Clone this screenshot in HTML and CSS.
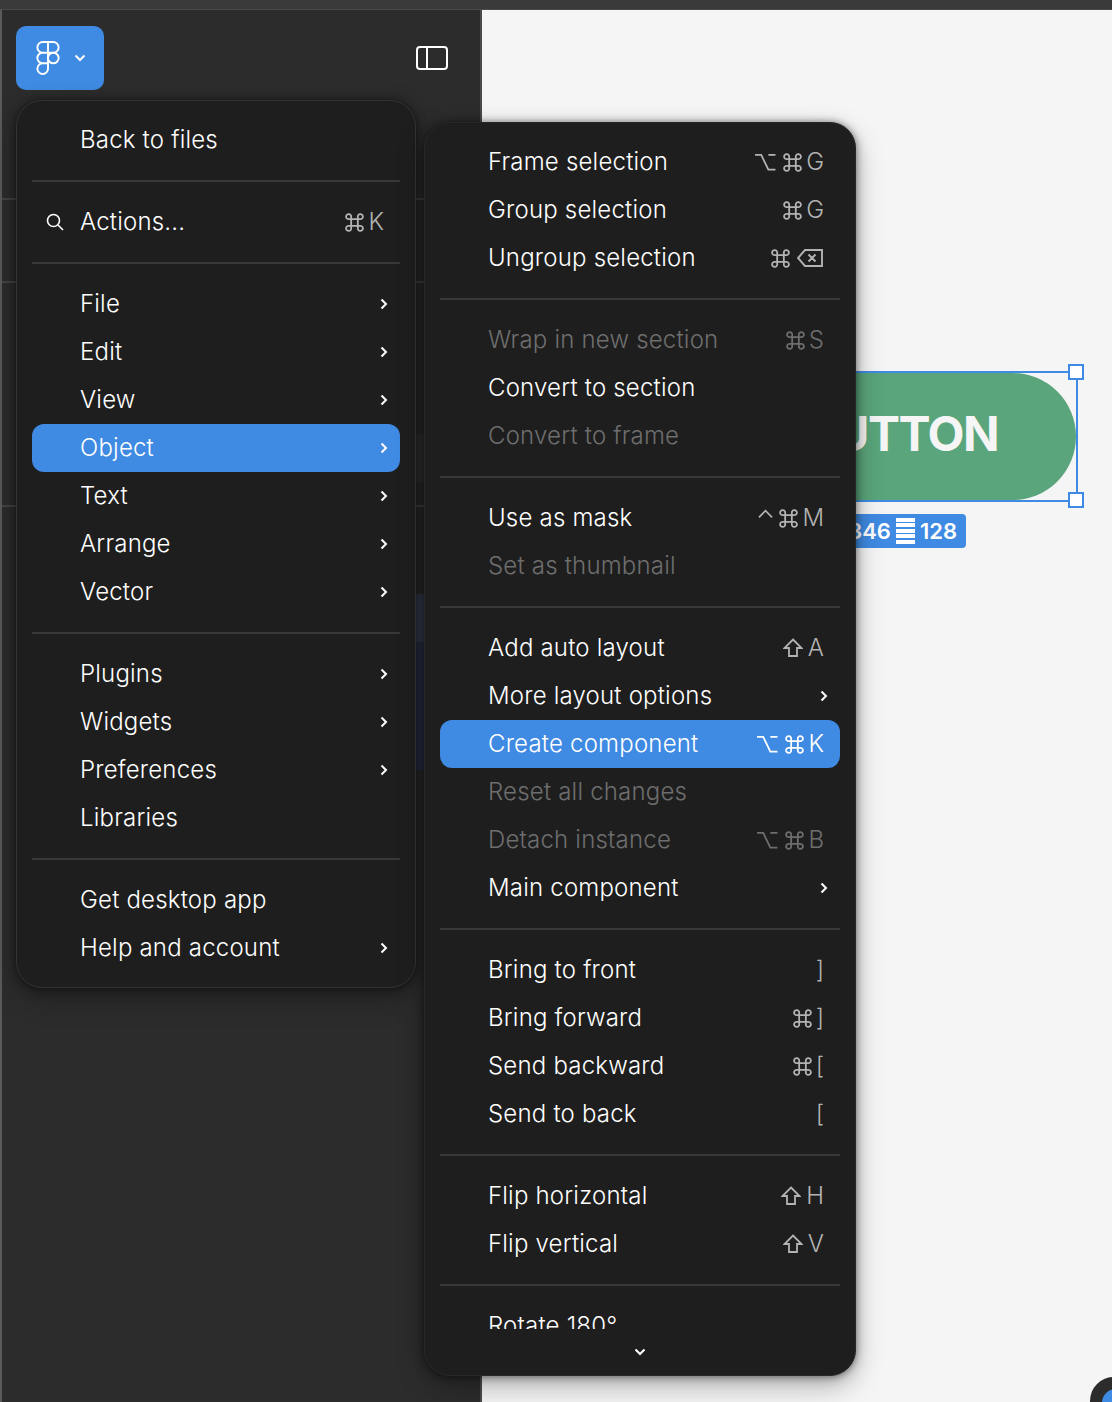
FILE: index.html
```html
<!DOCTYPE html>
<html lang="en">
<head>
<meta charset="utf-8">
<title>Figma menu</title>
<link rel="stylesheet" href="styles.css">
</head>
<body>
<svg class="defs" width="0" height="0" aria-hidden="true">
  <symbol id="chev" viewBox="0 0 8 12"><path d="M1.5 1.5 6 6l-4.500 4.500" fill="none" stroke="currentColor" stroke-width="2"/></symbol>
  <symbol id="down" viewBox="0 0 12 8"><path d="M1.500 1.500 6 6l4.500-4.500" fill="none" stroke="currentColor" stroke-width="2"/></symbol>
  <symbol id="cmd" viewBox="0 0 20 20"><path d="M6.500 6.500h7v7h-7zM6.500 6.500H4.300a2.700 2.700 0 1 1 2.200-2.200zM13.500 6.500V4.300a2.700 2.700 0 1 1 2.200 2.200zM13.500 13.500h2.200a2.700 2.700 0 1 1-2.200 2.200zM6.500 13.500v2.200a2.700 2.700 0 1 1-2.200-2.200z" fill="none" stroke="currentColor" stroke-width="1.900"/></symbol>
  <symbol id="opt" viewBox="0 0 22 20"><path d="M0 2h6.500L14 17.500h7.500M14 2h7.500" fill="none" stroke="currentColor" stroke-width="1.900"/></symbol>
  <symbol id="shift" viewBox="0 0 20 20"><path d="M10 1.500 18.500 10H14v8H6v-8H1.500z" fill="none" stroke="currentColor" stroke-width="1.800"/></symbol>
  <symbol id="ctrl" viewBox="0 0 16 10"><path d="M1 8.500 8 1.500l7 7" fill="none" stroke="currentColor" stroke-width="1.800"/></symbol>
  <symbol id="del" viewBox="0 0 26 18"><path d="M8 1h17v16H8L1 9zM11.500 5.500l7 7M18.500 5.500l-7 7" fill="none" stroke="currentColor" stroke-width="1.900"/></symbol>
</svg>

<div class="app">
  <div class="topbar"></div>
  <div class="main">
    <div class="rail"></div>
    <aside class="sidebar">
      <header class="side-head">
        <button class="logo-btn" type="button">
          <svg class="logo" width="24" height="34" viewBox="0 0 22 32"><path d="M11 1H6a5 5 0 0 0 0 10h5zM11 1h5a5 5 0 0 1 0 10h-5zM11 11H6a5 5 0 0 0 0 10h5zM6 21h5v5a5 5 0 1 1-5-5z" fill="none" stroke="#fff" stroke-width="1.800"/><circle cx="16" cy="16" r="5" fill="none" stroke="#fff" stroke-width="1.800"/></svg>
          <svg class="logo-caret" width="12" height="8"><use href="#down"/></svg>
        </button>
        <svg class="panel-icon" width="32" height="24" viewBox="0 0 32 24"><rect x="1" y="1" width="30" height="22" rx="3" fill="none" stroke="#fff" stroke-width="2"/><path d="M11 1v22" stroke="#fff" stroke-width="2"/></svg>
      </header>
      <div class="side-sec sec-a"></div>
      <div class="side-sec sec-b"><div class="layer hover"></div></div>
      <div class="side-sec sec-c">
        <div class="layer sel"></div>
        <div class="layer sel-child"></div>
      </div>
    </aside>
    <section class="canvas">
      <div class="target">
        <div class="green-btn">BUTTON</div>
        <i class="handle h-top"></i>
        <i class="handle h-bot"></i>
        <div class="size-label"><span>346</span><i class="bars"></i><span>128</span></div>
      </div>
      <div class="fab"><i></i></div>
    </section>
  </div>

  <nav class="menu menu-main">
    <div class="row"><span class="lbl">Back to files</span></div>
    <hr class="sep">
    <div class="row"><svg class="search" width="18" height="18" viewBox="0 0 18 18"><circle cx="7.500" cy="7.500" r="6" fill="none" stroke="currentColor" stroke-width="1.600"/><path d="m12 12 5 5" stroke="currentColor" stroke-width="1.600"/></svg><span class="lbl">Actions...</span><span class="keys"><svg class="k-cmd"><use href="#cmd"/></svg><b>K</b></span></div>
    <hr class="sep">
    <div class="row"><span class="lbl">File</span><svg class="arrow"><use href="#chev"/></svg></div>
    <div class="row"><span class="lbl">Edit</span><svg class="arrow"><use href="#chev"/></svg></div>
    <div class="row"><span class="lbl">View</span><svg class="arrow"><use href="#chev"/></svg></div>
    <div class="row active"><span class="lbl">Object</span><svg class="arrow"><use href="#chev"/></svg></div>
    <div class="row"><span class="lbl">Text</span><svg class="arrow"><use href="#chev"/></svg></div>
    <div class="row"><span class="lbl">Arrange</span><svg class="arrow"><use href="#chev"/></svg></div>
    <div class="row"><span class="lbl">Vector</span><svg class="arrow"><use href="#chev"/></svg></div>
    <hr class="sep">
    <div class="row"><span class="lbl">Plugins</span><svg class="arrow"><use href="#chev"/></svg></div>
    <div class="row"><span class="lbl">Widgets</span><svg class="arrow"><use href="#chev"/></svg></div>
    <div class="row"><span class="lbl">Preferences</span><svg class="arrow"><use href="#chev"/></svg></div>
    <div class="row"><span class="lbl">Libraries</span></div>
    <hr class="sep">
    <div class="row"><span class="lbl">Get desktop app</span></div>
    <div class="row"><span class="lbl">Help and account</span><svg class="arrow"><use href="#chev"/></svg></div>
  </nav>

  <nav class="menu menu-sub">
    <div class="scroller">
      <div class="row"><span class="lbl">Frame selection</span><span class="keys"><svg class="k-opt"><use href="#opt"/></svg><svg class="k-cmd"><use href="#cmd"/></svg><b>G</b></span></div>
      <div class="row"><span class="lbl">Group selection</span><span class="keys"><svg class="k-cmd"><use href="#cmd"/></svg><b>G</b></span></div>
      <div class="row"><span class="lbl">Ungroup selection</span><span class="keys"><svg class="k-cmd"><use href="#cmd"/></svg><svg class="k-del"><use href="#del"/></svg></span></div>
      <hr class="sep">
      <div class="row off"><span class="lbl">Wrap in new section</span><span class="keys"><svg class="k-cmd"><use href="#cmd"/></svg><b>S</b></span></div>
      <div class="row"><span class="lbl">Convert to section</span></div>
      <div class="row off"><span class="lbl">Convert to frame</span></div>
      <hr class="sep">
      <div class="row"><span class="lbl">Use as mask</span><span class="keys"><svg class="k-ctrl"><use href="#ctrl"/></svg><svg class="k-cmd"><use href="#cmd"/></svg><b>M</b></span></div>
      <div class="row off"><span class="lbl">Set as thumbnail</span></div>
      <hr class="sep">
      <div class="row"><span class="lbl">Add auto layout</span><span class="keys"><svg class="k-shift"><use href="#shift"/></svg><b>A</b></span></div>
      <div class="row"><span class="lbl">More layout options</span><svg class="arrow"><use href="#chev"/></svg></div>
      <div class="row active"><span class="lbl">Create component</span><span class="keys"><svg class="k-opt"><use href="#opt"/></svg><svg class="k-cmd"><use href="#cmd"/></svg><b>K</b></span></div>
      <div class="row off"><span class="lbl">Reset all changes</span></div>
      <div class="row off"><span class="lbl">Detach instance</span><span class="keys"><svg class="k-opt"><use href="#opt"/></svg><svg class="k-cmd"><use href="#cmd"/></svg><b>B</b></span></div>
      <div class="row"><span class="lbl">Main component</span><svg class="arrow"><use href="#chev"/></svg></div>
      <hr class="sep">
      <div class="row"><span class="lbl">Bring to front</span><span class="keys"><b>]</b></span></div>
      <div class="row"><span class="lbl">Bring forward</span><span class="keys"><svg class="k-cmd"><use href="#cmd"/></svg><b>]</b></span></div>
      <div class="row"><span class="lbl">Send backward</span><span class="keys"><svg class="k-cmd"><use href="#cmd"/></svg><b>[</b></span></div>
      <div class="row"><span class="lbl">Send to back</span><span class="keys"><b>[</b></span></div>
      <hr class="sep">
      <div class="row"><span class="lbl">Flip horizontal</span><span class="keys"><svg class="k-shift"><use href="#shift"/></svg><b>H</b></span></div>
      <div class="row"><span class="lbl">Flip vertical</span><span class="keys"><svg class="k-shift"><use href="#shift"/></svg><b>V</b></span></div>
      <hr class="sep">
      <div class="row"><span class="lbl">Rotate 180°</span></div>
    </div>
    <div class="more"><svg width="12" height="8"><use href="#down"/></svg></div>
  </nav>
</div>
</body>
</html>
```

FILE: styles.css
```css
* { box-sizing: border-box; }
html, body { margin: 0; padding: 0; background: #f5f5f5; }
.defs { position: absolute; }

.app {
  position: relative;
  width: 1112px;
  height: 1402px;
  overflow: hidden;
  display: flex;
  flex-direction: column;
  font-family: Inter, "Liberation Sans", sans-serif;
}

.topbar {
  flex: none;
  height: 10px;
  background: #3a3a3a;
  border-bottom: 1px solid #4b4b4b;
}

.main { flex: 1; display: flex; min-height: 0; }
.rail { flex: none; width: 2px; background: #5a5a5a; }

.sidebar {
  flex: none;
  width: 480px;
  background: #2c2c2c;
  border-right: 2px solid #4a4a4a;
  display: flex;
  flex-direction: column;
}

.side-head {
  flex: none;
  height: 190px;
  padding: 16px 32px 0 14px;
  display: flex;
  justify-content: space-between;
  align-items: flex-start;
  border-bottom: 2px solid #444;
}

.logo-btn {
  width: 88px;
  height: 64px;
  padding: 0 0 0 20px;
  border: 0;
  border-radius: 10px;
  background: #3f8ae2;
  color: #fff;
  display: flex;
  align-items: center;
  gap: 14px;
}
.logo { flex: none; }
.logo-caret { flex: none; color: #fff; }
.panel-icon { margin-top: 20px; }

.side-sec { flex: none; border-bottom: 2px solid #444; }
.sec-a { height: 83px; }
.sec-b { height: 224px; padding-top: 151px; }
.sec-c { flex: 1; border-bottom: 0; padding-top: 87px; }

.layer { height: 48px; margin-left: 300px; }
.layer.hover { background: #323232; }
.layer.sel { background: #363d50; }
.layer.sel-child { height: 128px; background: #2a3046; }

.canvas { flex: 1; position: relative; background: #f5f5f5; min-width: 0; }

.target {
  position: absolute;
  left: 248px;
  top: 361px;
  width: 348px;
  height: 131px;
  border: 2px solid #3f8ae2;
}

.green-btn {
  height: 100%;
  padding: 0 6px 7px 0;
  border-radius: 64px;
  background: #5aa57b;
  color: #f5f5f5;
  font-size: 48px;
  font-weight: 700;
  letter-spacing: -1.500px;
  display: flex;
  align-items: center;
  justify-content: center;
}

.handle {
  position: absolute;
  right: -8px;
  width: 16px;
  height: 16px;
  background: #fff;
  border: 2px solid #3f8ae2;
}
.h-top { top: -9px; }
.h-bot { bottom: -8px; }

.size-label {
  position: absolute;
  top: 141px;
  left: 110px;
  width: 124px;
  height: 34px;
  padding-right: 9px;
  border-radius: 4px;
  background: #3f8ae2;
  color: #fff;
  font-size: 22px;
  font-weight: 600;
  display: flex;
  align-items: center;
  justify-content: flex-end;
  gap: 5px;
}
.bars {
  width: 19px;
  height: 26px;
  background: repeating-linear-gradient(#fff 0 4px, transparent 4px 5.500px);
}

.fab {
  position: absolute;
  left: 608px;
  top: 1367px;
  width: 48px;
  height: 48px;
  border-radius: 50%;
  background: #2c2c2c;
  padding: 12px;
}
.fab i {
  display: block;
  width: 28px;
  height: 28px;
  border-radius: 50%;
  background: #3f8ae2;
}

.menu {
  position: absolute;
  background: #1e1e1e;
  border: 1px solid #333;
  border-radius: 26px;
  color: #fff;
  font-size: 24px;
  font-weight: 360;
  box-shadow: 0 0 6px rgba(0, 0, 0, .35), 0 2px 12px rgba(0, 0, 0, .25), 0 10px 28px rgba(0, 0, 0, .28);
}

.menu-main {
  left: 16px;
  top: 100px;
  width: 400px;
  height: 888px;
  padding: 15px 15px 0;
}

.menu-sub {
  left: 424px;
  top: 122px;
  width: 432px;
  height: 1254px;
  padding: 15px 15px 0;
  border-color: #282828;
  display: flex;
  flex-direction: column;
}

.scroller { flex: none; height: 1191px; overflow: hidden; }
.more {
  flex: 1;
  display: flex;
  align-items: center;
  justify-content: center;
  color: #fff;
}

.row {
  position: relative;
  height: 48px;
  padding: 0 16px 0 48px;
  border-radius: 12px;
  display: flex;
  align-items: center;
  justify-content: space-between;
  white-space: nowrap;
}
.lbl { line-height: 48px; letter-spacing: .2px; }
.row.active { background: #3f8ae2; }
.row.off { color: #6e6e6e; }

.search { position: absolute; left: 14px; top: 15px; color: #fff; }

.sep {
  height: 2px;
  margin: 16px 0;
  border: 0;
  background: #383838;
}

.arrow { width: 8px; height: 12px; color: #fff; margin-right: -4px; }

.keys {
  display: flex;
  align-items: center;
  gap: 4px;
  color: #b3b3b3;
}
.keys b { font-weight: inherit; line-height: 48px; }
.k-cmd { width: 19px; height: 19px; }
.k-opt { width: 21px; height: 19px; margin-right: 3px; }
.k-shift { width: 20px; height: 20px; margin-right: 1px; }
.k-ctrl { width: 15px; height: 10px; margin-right: 2px; margin-bottom: 8px; }
.k-del { width: 26px; height: 18px; margin-left: 3px; margin-right: 1px; }
.row.active .keys { color: #fff; }
.row.off .keys { color: #6e6e6e; }
```
